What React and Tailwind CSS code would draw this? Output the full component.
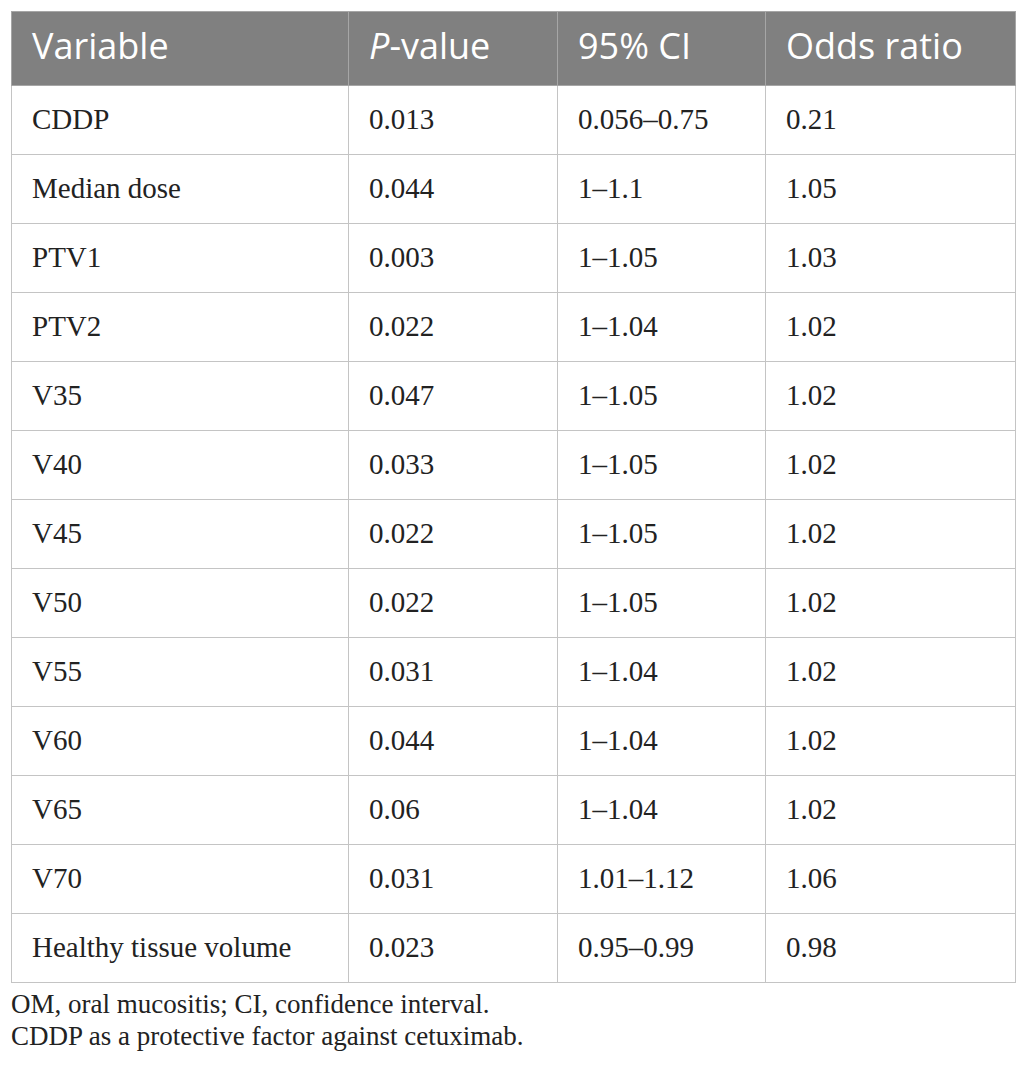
import React from "react";

const rows = [
  ["CDDP", "0.013", "0.056–0.75", "0.21"],
  ["Median dose", "0.044", "1–1.1", "1.05"],
  ["PTV1", "0.003", "1–1.05", "1.03"],
  ["PTV2", "0.022", "1–1.04", "1.02"],
  ["V35", "0.047", "1–1.05", "1.02"],
  ["V40", "0.033", "1–1.05", "1.02"],
  ["V45", "0.022", "1–1.05", "1.02"],
  ["V50", "0.022", "1–1.05", "1.02"],
  ["V55", "0.031", "1–1.04", "1.02"],
  ["V60", "0.044", "1–1.04", "1.02"],
  ["V65", "0.06", "1–1.04", "1.02"],
  ["V70", "0.031", "1.01–1.12", "1.06"],
  ["Healthy tissue volume", "0.023", "0.95–0.99", "0.98"],
];

const App = () => {
  return (
    <div className="bg-white w-[1026px] h-[1073px] pt-[11px] px-[11px]">
      <table className="w-[1004px] border-collapse table-fixed">
        <colgroup>
          <col className="w-[337px]" />
          <col className="w-[209px]" />
          <col className="w-[208px]" />
          <col className="w-[250px]" />
        </colgroup>
        <thead>
          {/* header row */}
          <tr className="h-[74px] bg-[#808080] text-white text-[36px] leading-none font-['Open_Sans',sans-serif]">
            <th className="border border-[#a6a6a6] text-left font-normal pl-5 pr-2 pb-[5px]">Variable</th>
            <th className="border border-[#a6a6a6] text-left font-normal pl-5 pr-2 pb-[5px]">
              <i>P</i>-value
            </th>
            <th className="border border-[#a6a6a6] text-left font-normal pl-5 pr-2 pb-[5px]">95% CI</th>
            <th className="border border-[#a6a6a6] text-left font-normal pl-5 pr-2 pb-[5px]">Odds ratio</th>
          </tr>
        </thead>
        <tbody className="text-[#222] text-[29px] font-['Liberation_Serif',serif]">
          {rows.map((r, i) => (
            <tr key={i} className="h-[69px]">
              {r.map((c, j) => (
                <td key={j} className="border border-[#c4c4c4] pl-5 pr-2">
                  {c}
                </td>
              ))}
            </tr>
          ))}
        </tbody>
      </table>
      <div className="mt-[5px] text-[#222] text-[27px] leading-[32px] font-['Liberation_Serif',serif]">
        <p>OM, oral mucositis; CI, confidence interval.</p>
        <p>CDDP as a protective factor against cetuximab.</p>
      </div>
    </div>
  );
};

export default App;
